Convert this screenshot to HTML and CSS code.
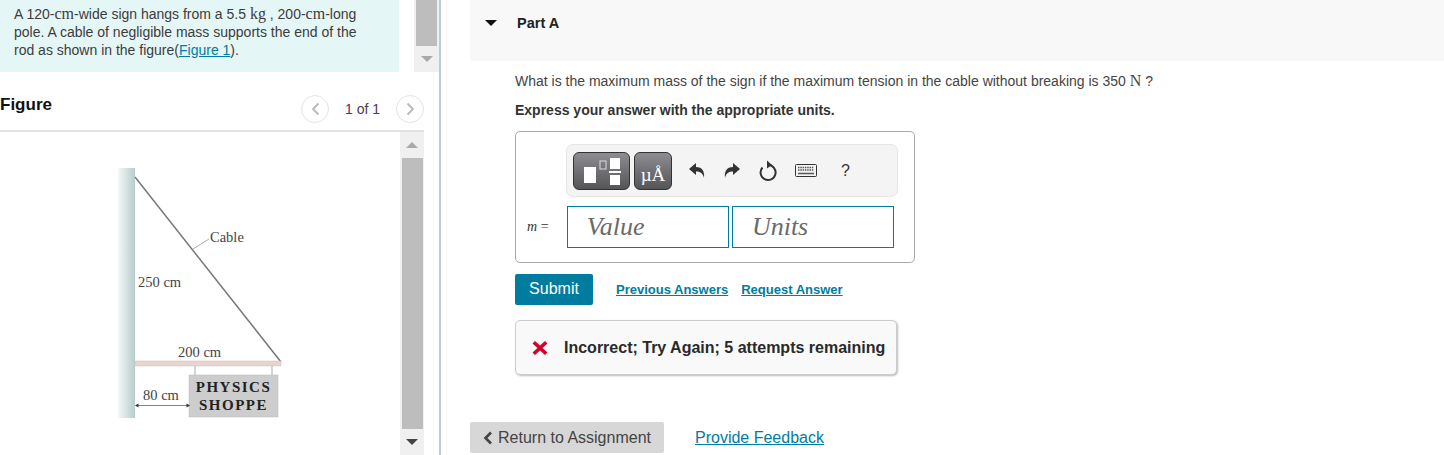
FILE: index.html
```html
<!doctype html>
<html>
<head>
<meta charset="utf-8">
<title>Part A</title>
<link rel="stylesheet" href="styles.css">
</head>

<body>
<div class="page">
	<div class="left">
		<div class="top_row">
			<div class="intro">A 120-<span class="math">cm</span>-wide sign hangs from a 5.5 <span class="math">kg</span> , 200-<span class="math">cm</span>-long pole. A cable of negligible mass supports the end of the rod as shown in the figure(<a href="javascript:;">Figure 1</a>).</div>
			<div class="scroll scroll_top">
				<div class="thumb"></div>
				<div class="arrow_box"><i class="arr_down"></i></div>
			</div>
		</div>
		<div class="fig_head">
			<h2>Figure</h2>
			<div class="pager">
				<span class="circle"><svg width="9" height="14" viewBox="0 0 9 14"><path d="M7.500 1.500 L2 7 L7.500 12.500" fill="none" stroke="#b5b8bc" stroke-width="1.800"/></svg></span>
				<span class="count">1 of 1</span>
				<span class="circle"><svg width="9" height="14" viewBox="0 0 9 14"><path d="M1.500 1.500 L7 7 L1.500 12.500" fill="none" stroke="#b5b8bc" stroke-width="1.800"/></svg></span>
			</div>
		</div>
		<div class="fig_row">
			<div class="fig_box">
				<svg class="diagram" width="400" height="323" viewBox="0 0 400 323">
					<defs>
						<linearGradient id="wall" x1="0" x2="1" y1="0" y2="0">
							<stop offset="0" stop-color="#f4f8f8"/>
							<stop offset="1" stop-color="#b9cccc"/>
						</linearGradient>
					</defs>
					<rect x="118" y="36" width="17" height="250" fill="url(#wall)"/>
					<path d="M135 45 L281 230" stroke="#77777a" stroke-width="1.500" fill="none"/>
					<path d="M193 117 L209 107" stroke="#aaa" stroke-width="1" fill="none"/>
					<text x="210" y="110" class="dg_text">Cable</text>
					<text x="138" y="155" class="dg_text">250 cm</text>
					<text x="178" y="225" class="dg_text">200 cm</text>
					<rect x="135" y="229" width="146" height="5" fill="#e8d3cd" stroke="#c9c4c0" stroke-width="0.500"/>
					<path d="M195 234 V243 M272 234 V243" stroke="#aaa" stroke-width="1"/>
					<rect x="189" y="243" width="89" height="42" fill="#cdcdcd" stroke="#bbb" stroke-width="0.500"/>
					<text x="233.500" y="260" class="sign_text">PHYSICS</text>
					<text x="233.500" y="278" class="sign_text">SHOPPE</text>
					<text x="143" y="268" class="dg_text">80 cm</text>
					<path d="M137 273.500 H188" stroke="#666" stroke-width="0.800"/>
					<path d="M135 273.500 L138.500 271.500 V275.500 Z M190 273.500 L186.500 271.500 V275.500 Z" fill="#333"/>
				</svg>
			</div>
			<div class="scroll scroll_fig">
				<div class="arrow_box"><i class="arr_up"></i></div>
				<div class="thumb"></div>
				<div class="arrow_box"><i class="arr_down dark"></i></div>
			</div>
		</div>
	</div>

	<div class="right">
		<div class="part_head"><i class="caret"></i><span>Part A</span></div>
		<div class="content">
			<p class="question">What is the maximum mass of the sign if the maximum tension in the cable without breaking is 350 <span class="math">N</span> ?</p>
			<p class="express">Express your answer with the appropriate units.</p>

			<div class="answer_box">
				<div class="toolbar">
					<span class="tool_btn tmpl">
						<svg width="44" height="30" viewBox="0 0 44 30">
							<rect x="4" y="11" width="12" height="16" fill="#fff"/>
							<rect x="20" y="5" width="6" height="8" fill="none" stroke="#ddd" stroke-width="1"/>
							<rect x="30" y="2" width="10" height="11" fill="#fff"/>
							<rect x="29" y="15" width="12" height="2" fill="#fff"/>
							<rect x="30" y="19" width="10" height="10" fill="#fff"/>
						</svg>
					</span>
					<span class="tool_btn unit"><span>µÅ</span></span>
					<svg class="tool" width="18" height="20" viewBox="0 0 18 20"><path d="M1 8 L8 2 V6 C13 6 17 9 16 17 C15 12 12 10.500 8 10.500 V14 Z" fill="#333"/></svg>
					<svg class="tool" width="18" height="20" viewBox="0 0 18 20"><path d="M17 8 L10 2 V6 C5 6 1 9 2 17 C3 12 6 10.500 10 10.500 V14 Z" fill="#333"/></svg>
					<svg class="tool" width="20" height="22" viewBox="0 0 20 22"><path d="M10 5 A7.500 7.500 0 1 1 4.500 7.500" fill="none" stroke="#333" stroke-width="2"/><path d="M9 0.500 L14 5 L9 8.500 Z" fill="#333"/></svg>
					<svg class="tool" width="22" height="14" viewBox="0 0 22 14"><rect x="0.500" y="0.500" width="21" height="12" rx="1" fill="#f4f4f4" stroke="#333"/><path d="M3 3.500 H19 M3 6 H19" stroke="#555" stroke-width="1.400" stroke-dasharray="1.500 .8"/><path d="M3 9.500 H19" stroke="#555" stroke-width="1.500"/></svg>
					<span class="help">?</span>
				</div>
				<div class="input_row">
					<label><i>m</i> =</label>
					<div class="field">Value</div>
					<div class="field">Units</div>
				</div>
			</div>

			<div class="actions">
				<a class="submit" href="javascript:;">Submit</a>
				<a class="small_link" href="javascript:;">Previous Answers</a>
				<a class="small_link" href="javascript:;">Request Answer</a>
			</div>

			<div class="feedback">
				<svg width="16" height="16" viewBox="0 0 16 16"><path d="M3 1 L8 5.500 L13 1 L15.500 3.500 L10.500 8 L15.500 12.500 L13 15 L8 10.500 L3 15 L.500 12.500 L5.500 8 L.500 3.500 Z" fill="#d5002c"/></svg>
				<span>Incorrect; Try Again; 5 attempts remaining</span>
			</div>
		</div>

		<div class="bottom">
			<a class="back" href="javascript:;"><svg width="10" height="14" viewBox="0 0 10 14"><path d="M8 1.500 L2.500 7 L8 12.500" fill="none" stroke="#444" stroke-width="2.600"/></svg>Return to Assignment</a>
			<a class="provide" href="javascript:;">Provide Feedback</a>
		</div>
	</div>
</div>
</body>
</html>
```

FILE: styles.css
```css
*{margin:0; padding:0; box-sizing:border-box;}
html,body{height:100%; overflow:hidden; background:#fff;}
body{font-family:"Liberation Sans",Arial,sans-serif; font-size:14px; color:#333;}
a{color:#007c9e;}
.math{font-family:"Liberation Serif","DejaVu Serif",serif; font-size:16px;}

.page{display:flex; width:1444px; height:455px;}

.left{width:441px; height:455px; flex:none; border-right:2px solid #b9cde0; display:flex; flex-direction:column;}
.top_row{display:flex; height:72px;}
.intro{width:400px; height:72px; background:#e5f6f7; padding:5px 20px 0 14px; line-height:18px; font-size:14px; color:#3c3c3c;}
.scroll{background:#f0f0f0; display:flex; flex-direction:column; align-items:center;}
.scroll .thumb{background:#bdbdbd; width:21px; flex:1;}
.arrow_box{height:26px; width:100%; display:flex; align-items:center; justify-content:center; flex:none;}
.scroll_top{width:25px; margin-left:15px;}
.scroll_top .arrow_box{height:26px;}
.arr_down{width:0; height:0; border-left:6px solid transparent; border-right:6px solid transparent; border-top:6px solid #a9a9a9;}
.arr_down.dark{border-top-color:#444;}
.arr_up{width:0; height:0; border-left:6px solid transparent; border-right:6px solid transparent; border-bottom:6px solid #a9a9a9;}

.fig_head{width:424px; height:60px; border-bottom:2px solid #e1e1e1; display:flex; justify-content:space-between; align-items:flex-start; padding-top:22px;}
.fig_head h2{font-size:17px; line-height:22px; font-weight:bold; color:#111;}
.pager{display:flex; align-items:center; margin-top:1px;}
.circle{width:28px; height:28px; border:1px solid #e4e4e4; border-radius:50%; display:flex; align-items:center; justify-content:center;}
.count{width:67px; text-align:center; font-size:14px; color:#4b3a5a;}

.fig_row{display:flex; width:424px; flex:1; min-height:0;}
.fig_box{width:400px; overflow:hidden;}
.diagram{display:block;}
.dg_text{font-family:"Liberation Serif",serif; font-size:14.500px; fill:#444;}
.sign_text{font-family:"Liberation Serif",serif; font-size:15px; font-weight:bold; fill:#222; text-anchor:middle; letter-spacing:1.500px;}
.scroll_fig{width:24px; margin-top:0;}
.scroll_fig .thumb{width:21px;}

.right{flex:1; padding-left:29px; display:flex; flex-direction:column; min-width:0;}
.part_head{height:61px; background:#f8f8f8; display:flex; align-items:flex-start; padding:14px 0 0 15px; font-size:14.500px; line-height:18px; font-weight:bold; color:#222;}
.caret{width:0; height:0; border-left:6px solid transparent; border-right:6px solid transparent; border-top:6px solid #111; margin:6px 20px 0 0;}
.content{padding-left:45px; flex:1;}
.question{margin-top:10px; line-height:20px; font-size:14px; color:#444;}
.express{margin-top:9px; line-height:20px; font-size:14px; font-weight:bold; color:#333;}

.answer_box{width:400px; height:132px; margin-top:11px; border:1px solid #aaa; border-radius:5px; padding:12px 17px 0 11px; display:flex; flex-direction:column;}
.toolbar{width:332px; height:53px; margin-left:39px; background:#f4f4f4; border:1px solid #e5e5e5; border-radius:7px; display:flex; align-items:center; padding-left:6px;}
.tool_btn{height:38px; border:1px solid #333; border-radius:6px; background:linear-gradient(#8d8d92,#555558); display:flex; align-items:center; justify-content:center; color:#fff;}
.tmpl{width:57px;}
.unit{width:38px; margin-left:4px; font-family:"Liberation Serif",serif; font-size:19px; align-items:flex-end; padding-bottom:3px;}
.tool{margin-left:17px; flex:none;}
.tool_btn + .tool{margin-left:16px;}
.help{margin-left:24px; font-size:16px; color:#333;}
.input_row{display:flex; align-items:center; margin-top:9px;}
.input_row label{width:40px; font-family:"Liberation Serif",serif; font-size:14px; color:#333; white-space:nowrap;}
.field{width:163px; height:42px; border:1px solid #007c9e; margin-right:3px; font-family:"Liberation Serif",serif; font-style:italic; font-size:26px; line-height:40px; padding-left:19px; color:#6a6a6a;}

.actions{display:flex; align-items:center; margin-top:11px; height:31px;}
.submit{width:78px; height:31px; background:#007c9e; color:#fff; border-radius:2px; text-align:center; line-height:29px; font-size:16px; text-decoration:none; margin-right:23px;}
.small_link{font-size:13px; font-weight:bold; margin-right:13px;}

.feedback{width:382px; height:55px; margin-top:15px; background:#f9f9f9; border:1px solid #ccc; border-radius:5px; box-shadow:1px 1px 2px #bbb; display:flex; align-items:center; padding-left:16px; font-size:16px; font-weight:bold; color:#2a2a2a;}
.feedback svg{margin-right:16px; flex:none;}

.bottom{display:flex; align-items:center; height:31px; margin-bottom:2px;}
.back{width:194px; height:31px; background:#d7d7d7; border-radius:2px; display:flex; align-items:center; padding-left:13px; font-size:16px; color:#444; text-decoration:none;}
.back svg{margin-right:5px;}
.provide{margin-left:31px; font-size:16px;}
```
